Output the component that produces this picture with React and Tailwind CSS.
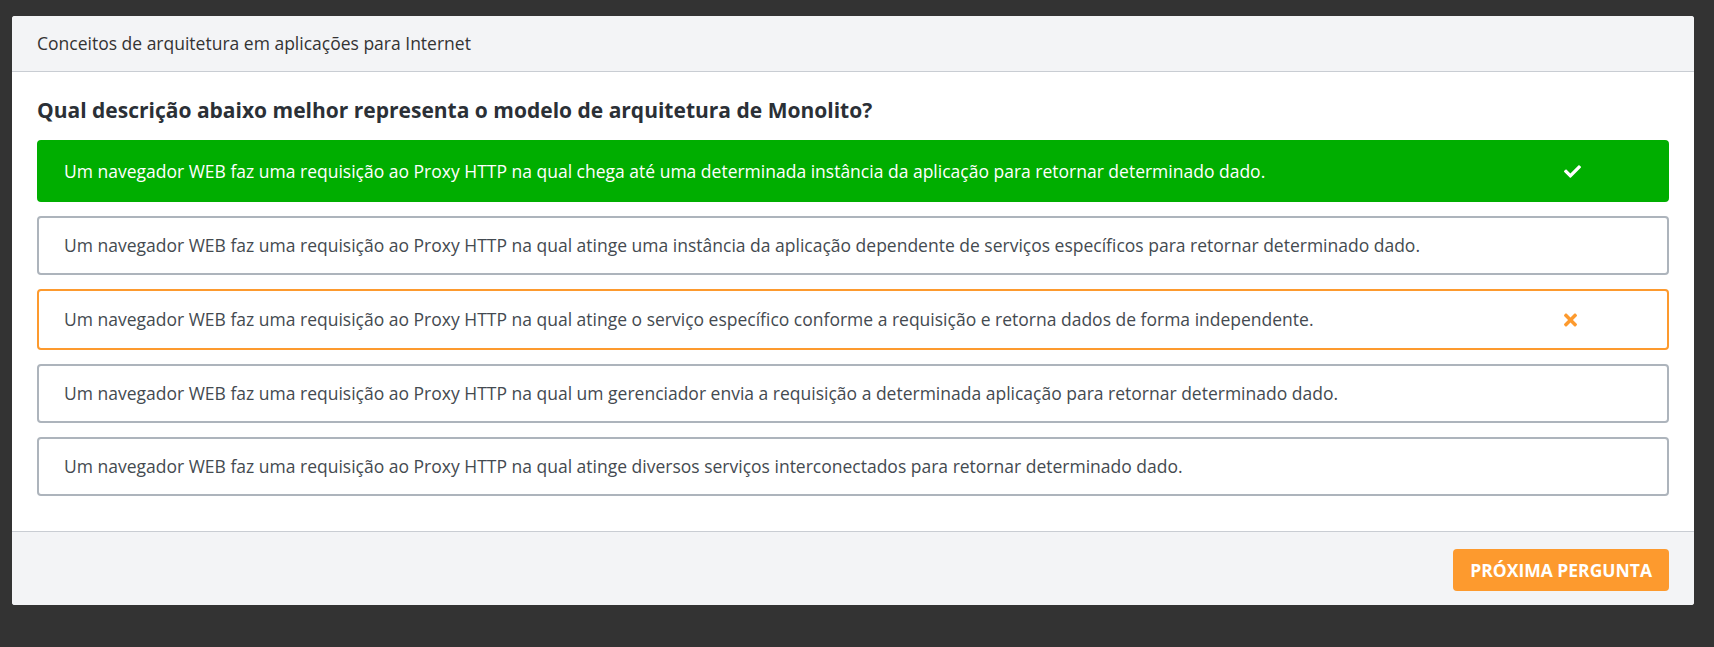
import React from "react";
import { FaCheck, FaTimes } from "react-icons/fa";

const options = [
  { text: "Um navegador WEB faz uma requisição ao Proxy HTTP na qual chega até uma determinada instância da aplicação para retornar determinado dado.", state: "correct" },
  { text: "Um navegador WEB faz uma requisição ao Proxy HTTP na qual atinge uma instância da aplicação dependente de serviços específicos para retornar determinado dado.", state: "none" },
  { text: "Um navegador WEB faz uma requisição ao Proxy HTTP na qual atinge o serviço específico conforme a requisição e retorna dados de forma independente.", state: "wrong" },
  { text: "Um navegador WEB faz uma requisição ao Proxy HTTP na qual um gerenciador envia a requisição a determinada aplicação para retornar determinado dado.", state: "none" },
  { text: "Um navegador WEB faz uma requisição ao Proxy HTTP na qual atinge diversos serviços interconectados para retornar determinado dado.", state: "none" },
];

export default function App() {
  return (
    <div
      className="min-h-[647px] w-full bg-[#333333] pl-[12px] pt-[16px]"
      style={{ fontFamily: '"Open Sans", sans-serif' }}
    >
      <div className="w-[1682px] overflow-hidden rounded-[3px] bg-white">
        <div className="flex h-[56px] items-center border-b border-[#c9cdd3] bg-[#f3f4f6] px-[25px] text-[17.5px] text-[#333]">
          Conceitos de arquitetura em aplicações para Internet
        </div>
        <div className="px-[25px] pt-[24px] pb-[35px]">
          <h2 className="mb-[16px] text-[21px] font-bold leading-[28px] text-[#2b3036]">
            Qual descrição abaixo melhor representa o modelo de arquitetura de Monolito?
          </h2>
          <div className="flex flex-col gap-[14px]">
            {options.map((o, i) => {
              if (o.state === "correct") {
                return (
                  <div
                    key={i}
                    className="flex h-[62px] items-center justify-between rounded-[4px] border-2 border-[#00ae00] bg-[#00ae00] pl-[25px] pr-[86px] text-[17.5px] text-white"
                  >
                    <span>{o.text}</span>
                    <FaCheck className="h-[17px] w-[17px] text-white" />
                  </div>
                );
              }
              if (o.state === "wrong") {
                return (
                  <div
                    key={i}
                    className="flex h-[61px] items-center justify-between rounded-[4px] border-2 border-[#fd9a2e] bg-white pl-[25px] pr-[90px] text-[17.5px] text-[#444a50]"
                  >
                    <span>{o.text}</span>
                    <FaTimes className="h-[20px] w-[13px] text-[#fd9a2e]" />
                  </div>
                );
              }
              return (
                <div
                  key={i}
                  className="flex h-[59px] items-center rounded-[4px] border-2 border-[#adb4bc] bg-white px-[25px] text-[17.5px] text-[#444a50]"
                >
                  <span>{o.text}</span>
                </div>
              );
            })}
          </div>
        </div>
        <div className="flex h-[74px] justify-end border-t border-[#c9cdd3] bg-[#f3f4f6] pr-[25px] pt-[17px]">
          <button className="h-[42px] rounded-[4px] bg-[#fd9a2e] px-[17px] text-[17.5px] font-bold uppercase text-white">
            Próxima pergunta
          </button>
        </div>
      </div>
    </div>
  );
}
